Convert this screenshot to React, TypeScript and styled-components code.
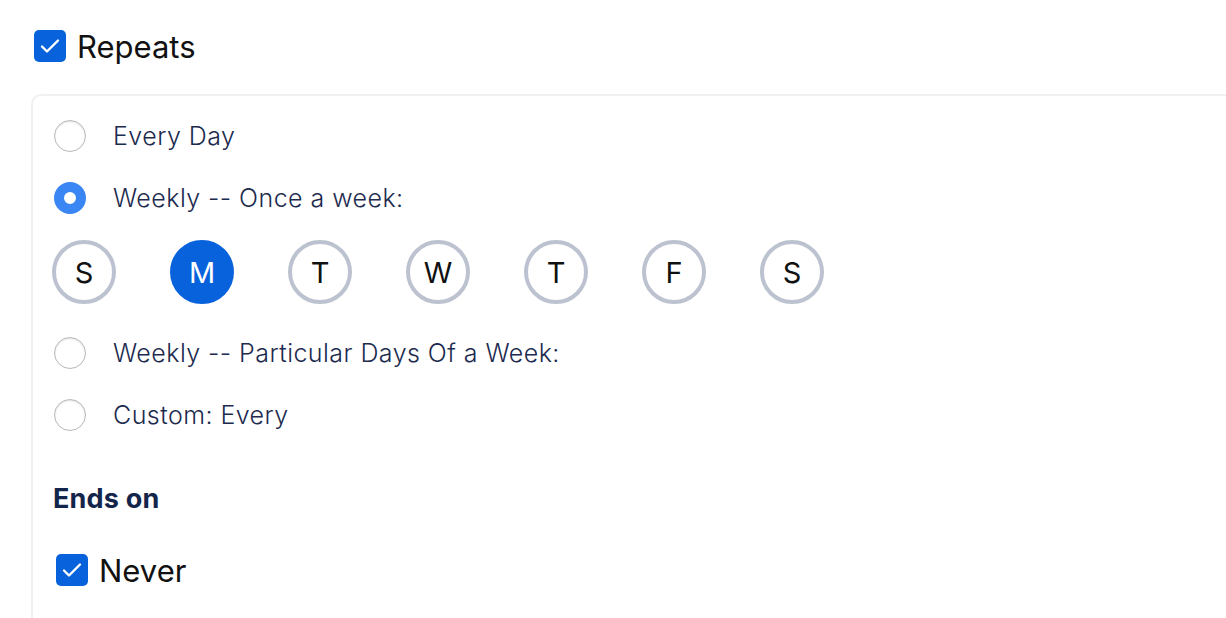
import React, { useState } from "react";
import styled, { createGlobalStyle } from "styled-components";

const GlobalStyle = createGlobalStyle`
  html, body {
    margin: 0;
    padding: 0;
    background: #ffffff;
    font-family: Inter, "Liberation Sans", sans-serif;
  }
`;

const Page = styled.div`
  width: 1226px;
  height: 618px;
  overflow: hidden;
  box-sizing: border-box;
  padding: 30px 0 0 31px;
`;

const CheckRow = styled.label<{ $indent?: number }>`
  display: flex;
  align-items: center;
  gap: 11px;
  height: 32px;
  margin-left: ${(p) => p.$indent ?? 3}px;
  font-size: 31px;
  color: #111;
  cursor: pointer;
`;

const CheckBox = styled.span`
  width: 32px;
  height: 32px;
  border-radius: 5px;
  background: #0862dc;
  display: flex;
  align-items: center;
  justify-content: center;
  flex-shrink: 0;
`;

const Card = styled.div`
  margin-top: 32px;
  border: 2px solid #f0f0f0;
  border-right: none;
  border-radius: 10px 0 0 0;
  padding: 9px 0 0 21px;
  height: 600px;
`;

const RadioRow = styled.label<{ $gap?: number }>`
  display: flex;
  align-items: center;
  gap: 27px;
  height: 62px;
  margin-top: ${(p) => p.$gap ?? 0}px;
  font-size: 25px;
  font-weight: 350;
  letter-spacing: 0.45px;
  color: #1d2b4f;
  cursor: pointer;
`;

const RadioDot = styled.span<{ $on: boolean }>`
  width: 32px;
  height: 32px;
  border-radius: 50%;
  box-sizing: border-box;
  flex-shrink: 0;
  background: #fff;
  border: ${(p) => (p.$on ? "10px solid #3a86f4" : "1.5px solid #b9b9b9")};
  box-shadow: ${(p) => (p.$on ? "none" : "inset 0 1px 2px rgba(0,0,0,0.12)")};
`;

const Days = styled.div`
  display: flex;
  gap: 54px;
  margin: 11px 0 0 -2px;
`;

const Day = styled.button<{ $on: boolean }>`
  width: 64px;
  height: 64px;
  border-radius: 50%;
  box-sizing: border-box;
  padding: 0;
  border: 4px solid ${(p) => (p.$on ? "#0862dc" : "#bcc2cf")};
  background: ${(p) => (p.$on ? "#0862dc" : "#fff")};
  color: ${(p) => (p.$on ? "#fff" : "#111")};
  font-family: Inter, "Liberation Sans", sans-serif;
  font-size: 29px;
  display: flex;
  align-items: center;
  justify-content: center;
  cursor: pointer;
`;

const Heading = styled.div`
  font-size: 27px;
  line-height: 29px;
  font-weight: 700;
  letter-spacing: 0.2px;
  color: #13254a;
  margin: 38px 0 41px -1px;
`;

const Check = () => (
  <svg width="24" height="24" viewBox="0 0 24 24" fill="none">
    <path d="M4 12.5l5 5L20 6.5" stroke="#fff" strokeWidth="2.4" strokeLinecap="round" strokeLinejoin="round" />
  </svg>
);

const options = [
  "Every Day",
  "Weekly -- Once a week:",
  "Weekly -- Particular Days Of a Week:",
  "Custom: Every",
];
const days = ["S", "M", "T", "W", "T", "F", "S"];

export default function App() {
  const [choice, setChoice] = useState(1);
  const [day, setDay] = useState(1);

  const radio = (i: number, gap?: number) => (
    <RadioRow key={i} $gap={gap} onClick={() => setChoice(i)}>
      <RadioDot $on={choice === i} />
      {options[i]}
    </RadioRow>
  );

  return (
    <Page>
      <GlobalStyle />
      <CheckRow>
        <CheckBox>
          <Check />
        </CheckBox>
        Repeats
      </CheckRow>
      <Card>
        {radio(0)}
        {radio(1)}
        <Days>
          {days.map((d, i) => (
            <Day key={i} $on={day === i} onClick={() => setDay(i)}>
              {d}
            </Day>
          ))}
        </Days>
        {radio(2, 18)}
        {radio(3)}
        <Heading>Ends on</Heading>
        <CheckRow $indent={2}>
          <CheckBox>
            <Check />
          </CheckBox>
          Never
        </CheckRow>
      </Card>
    </Page>
  );
}
